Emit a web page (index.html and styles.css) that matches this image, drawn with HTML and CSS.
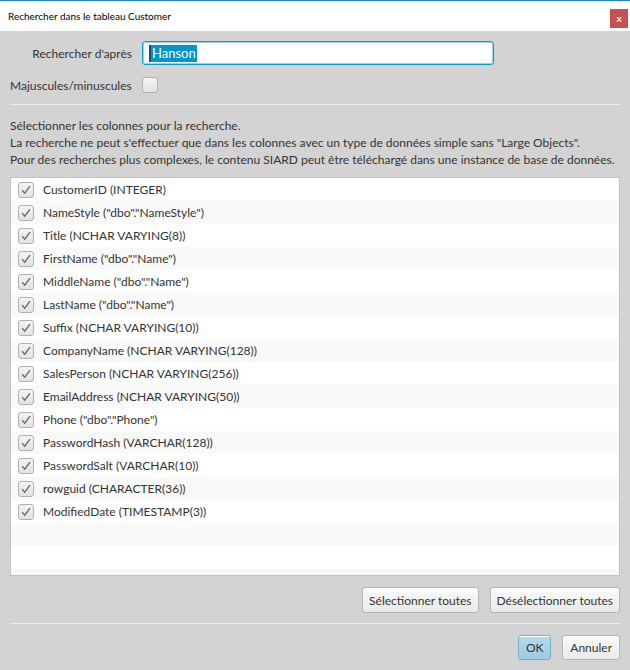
FILE: index.html
```html
<!DOCTYPE html>
<html lang="fr">
<head>
<meta charset="utf-8">
<link rel="stylesheet" href="styles.css">
</head>
<body>
<div class="window">
  <div class="titlebar">
    <span class="title">Rechercher dans le tableau Customer</span>
    <span class="close">x</span>
  </div>
  <div class="content">
    <div class="form">
      <label class="lbl">Rechercher d'après</label>
      <div class="field"><span class="sel">Hanson</span></div>
      <label class="lbl lbl-left">Majuscules/minuscules</label>
      <div class="cbwrap"><span class="cb"></span></div>
    </div>
    <div class="sep"></div>
    <div class="info">
      <p>Sélectionner les colonnes pour la recherche.</p>
      <p>La recherche ne peut s'effectuer que dans les colonnes avec un type de données simple sans "Large Objects".</p>
      <p>Pour des recherches plus complexes, le contenu SIARD peut être téléchargé dans une instance de base de données.</p>
    </div>
    <div class="list">
      <div class="row"><span class="cb on"><svg viewBox="0 0 16 16"><path d="M3.5 8.2 L6.6 11.6 L12.6 3.6" /></svg></span>CustomerID (INTEGER)</div>
      <div class="row"><span class="cb on"><svg viewBox="0 0 16 16"><path d="M3.5 8.2 L6.6 11.6 L12.6 3.6" /></svg></span>NameStyle ("dbo"."NameStyle")</div>
      <div class="row"><span class="cb on"><svg viewBox="0 0 16 16"><path d="M3.5 8.2 L6.6 11.6 L12.6 3.6" /></svg></span>Title (NCHAR VARYING(8))</div>
      <div class="row"><span class="cb on"><svg viewBox="0 0 16 16"><path d="M3.5 8.2 L6.6 11.6 L12.6 3.6" /></svg></span>FirstName ("dbo"."Name")</div>
      <div class="row"><span class="cb on"><svg viewBox="0 0 16 16"><path d="M3.5 8.2 L6.6 11.6 L12.6 3.6" /></svg></span>MiddleName ("dbo"."Name")</div>
      <div class="row"><span class="cb on"><svg viewBox="0 0 16 16"><path d="M3.5 8.2 L6.6 11.6 L12.6 3.6" /></svg></span>LastName ("dbo"."Name")</div>
      <div class="row"><span class="cb on"><svg viewBox="0 0 16 16"><path d="M3.5 8.2 L6.6 11.6 L12.6 3.6" /></svg></span>Suffix (NCHAR VARYING(10))</div>
      <div class="row"><span class="cb on"><svg viewBox="0 0 16 16"><path d="M3.5 8.2 L6.6 11.6 L12.6 3.6" /></svg></span>CompanyName (NCHAR VARYING(128))</div>
      <div class="row"><span class="cb on"><svg viewBox="0 0 16 16"><path d="M3.5 8.2 L6.6 11.6 L12.6 3.6" /></svg></span>SalesPerson (NCHAR VARYING(256))</div>
      <div class="row"><span class="cb on"><svg viewBox="0 0 16 16"><path d="M3.5 8.2 L6.6 11.6 L12.6 3.6" /></svg></span>EmailAddress (NCHAR VARYING(50))</div>
      <div class="row"><span class="cb on"><svg viewBox="0 0 16 16"><path d="M3.5 8.2 L6.6 11.6 L12.6 3.6" /></svg></span>Phone ("dbo"."Phone")</div>
      <div class="row"><span class="cb on"><svg viewBox="0 0 16 16"><path d="M3.5 8.2 L6.6 11.6 L12.6 3.6" /></svg></span>PasswordHash (VARCHAR(128))</div>
      <div class="row"><span class="cb on"><svg viewBox="0 0 16 16"><path d="M3.5 8.2 L6.6 11.6 L12.6 3.6" /></svg></span>PasswordSalt (VARCHAR(10))</div>
      <div class="row"><span class="cb on"><svg viewBox="0 0 16 16"><path d="M3.5 8.2 L6.6 11.6 L12.6 3.6" /></svg></span>rowguid (CHARACTER(36))</div>
      <div class="row"><span class="cb on"><svg viewBox="0 0 16 16"><path d="M3.5 8.2 L6.6 11.6 L12.6 3.6" /></svg></span>ModifiedDate (TIMESTAMP(3))</div>
      <div class="row"></div>
      <div class="row"></div>
      <div class="row"></div>
    </div>
    <div class="btnrow">
      <button class="btn">Sélectionner toutes</button>
      <button class="btn">Désélectionner toutes</button>
    </div>
    <div class="sep sep2"></div>
    <div class="btnrow btnrow2">
      <button class="btn default">OK</button>
      <button class="btn">Annuler</button>
    </div>
  </div>
</div>
</body>
</html>
```
FILE: styles.css
```css
html, body {
  margin: 0;
  padding: 0;
  background: #d3d3d3;
}
.window {
  width: 630px;
  height: 670px;
  font-family: "Lato", "Noto Sans", sans-serif;
  font-size: 12px;
  color: #333333;
  overflow: hidden;
}
.titlebar {
  height: 30px;
  background: #ffffff;
  border-top: 1px solid #1883d7;
  display: flex;
  align-items: center;
  justify-content: space-between;
  padding: 0 2px 0 8px;
}
.title {
  color: #000000;
  font-size: 10px;
}
.close {
  width: 18px;
  height: 19px;
  background: #c75050;
  color: #ffffff;
  font-weight: bold;
  font-size: 10px;
  display: flex;
  align-items: center;
  justify-content: center;
  margin-top: 4px;
}
.content {
  padding: 10px 10px 0 10px;
}
.form {
  display: grid;
  grid-template-columns: 122px 352px;
  column-gap: 10px;
  row-gap: 8px;
  align-items: center;
}
.lbl {
  justify-self: end;
  white-space: nowrap;
}
.lbl-left {
  justify-self: start;
}
.field {
  height: 24px;
  box-sizing: border-box;
  border: 1px solid #039ed3;
  box-shadow: inset 0 0 0 1px #9ed0e6;
  border-radius: 3px;
  background: #ffffff;
  display: flex;
  align-items: center;
  padding-left: 6px;
}
.sel {
  background: #0096c9;
  color: #ffffff;
  font-size: 13px;
  line-height: 17px;
  padding: 0 1px;
  border-left: 2px solid #1a4e78;
}
.cbwrap {
  height: 24px;
  display: flex;
  align-items: center;
}
.cb {
  width: 16px;
  height: 16px;
  box-sizing: border-box;
  border: 1px solid #b0b0b0;
  border-radius: 3px;
  background: linear-gradient(#f4f4f4, #e2e2e2);
  display: inline-flex;
  align-items: center;
  justify-content: center;
  flex-shrink: 0;
}
.cb svg {
  width: 16px;
  height: 16px;
}
.cb svg path {
  fill: none;
  stroke: #666666;
  stroke-width: 1.5;
}
.sep {
  height: 1px;
  background: #ececec;
  margin-top: 7px;
}
.info {
  padding-top: 12px;
}
.info p {
  margin: 0;
  line-height: 17px;
  white-space: nowrap;
}
.list {
  margin-top: 9px;
  height: 399px;
  box-sizing: border-box;
  border: 1px solid #c2c2c2;
  background: #ffffff;
  overflow: hidden;
}
.row {
  height: 23px;
  display: flex;
  align-items: center;
  padding-left: 7px;
  gap: 9px;
  color: #333333;
}
.row:nth-child(even) {
  background: #f9f9f9;
}
.btnrow {
  display: flex;
  justify-content: flex-end;
  gap: 11px;
  margin-top: 11px;
}
.btn {
  font-family: inherit;
  font-size: 12px;
  color: #333333;
  height: 26px;
  padding: 0 6px;
  border: 1px solid #b6b6b6;
  border-radius: 3px;
  background: linear-gradient(#fbfbfb, #e9e9e9);
  box-shadow: inset 0 1px 0 #ffffff;
}
.sep2 {
  margin-top: 10px;
}
.btnrow2 {
  margin-top: 11px;
}
.btnrow2 .btn {
  height: 25px;
  padding: 0 7px;
}
.btn.default {
  width: 33px;
  padding: 0;
  background: linear-gradient(#b5d9ec, #9ecbe2);
  border-color: #78aecb;
}
```
